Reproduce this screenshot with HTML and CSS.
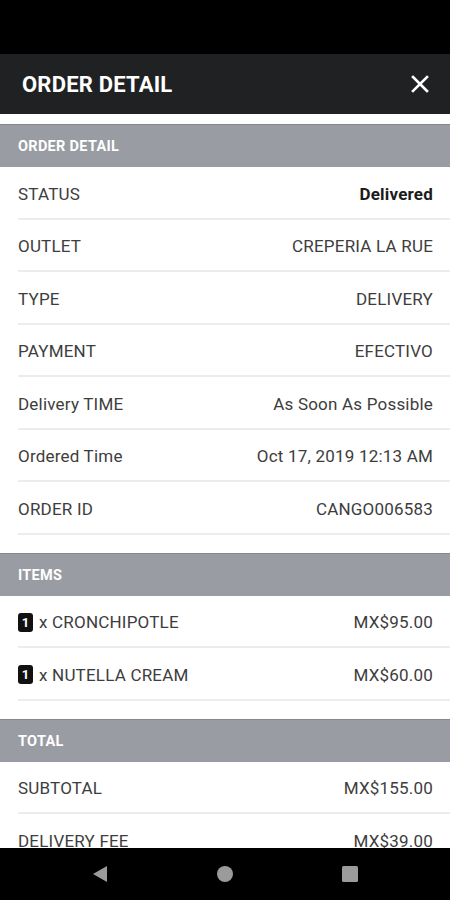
FILE: index.html
```html
<!DOCTYPE html>
<html lang="en">
  <head>
    <meta charset="UTF-8" />
    <meta name="viewport" content="width=device-width, initial-scale=1.0" />
    <title>Order Detail</title>
    <link rel="stylesheet" href="styles.css">
  </head>
  <body>
    <div class="phone">
      <div class="status-bar"></div>

      <header class="toolbar">
        <h1>ORDER DETAIL</h1>
        <svg class="close" width="18" height="18" viewBox="0 0 18 18">
          <path d="M2 2 L16 16 M16 2 L2 16" stroke="#fff" stroke-width="2.6" stroke-linecap="square" />
        </svg>
      </header>

      <main class="content">
        <section class="section">
          <div class="section-title">ORDER DETAIL</div>
          <div class="row"><span class="label">STATUS</span><span class="value strong">Delivered</span></div>
          <div class="row"><span class="label">OUTLET</span><span class="value">CREPERIA LA RUE</span></div>
          <div class="row"><span class="label">TYPE</span><span class="value">DELIVERY</span></div>
          <div class="row"><span class="label">PAYMENT</span><span class="value">EFECTIVO</span></div>
          <div class="row"><span class="label">Delivery TIME</span><span class="value">As Soon As Possible</span></div>
          <div class="row"><span class="label">Ordered Time</span><span class="value">Oct 17, 2019 12:13 AM</span></div>
          <div class="row"><span class="label">ORDER ID</span><span class="value">CANGO006583</span></div>
        </section>

        <section class="section">
          <div class="section-title">ITEMS</div>
          <div class="row">
            <span class="label"><span class="qty">1</span> x CRONCHIPOTLE</span>
            <span class="value">MX$95.00</span>
          </div>
          <div class="row">
            <span class="label"><span class="qty">1</span> x NUTELLA CREAM</span>
            <span class="value">MX$60.00</span>
          </div>
        </section>

        <section class="section">
          <div class="section-title">TOTAL</div>
          <div class="row"><span class="label">SUBTOTAL</span><span class="value">MX$155.00</span></div>
          <div class="row"><span class="label">DELIVERY FEE</span><span class="value">MX$39.00</span></div>
        </section>
      </main>

      <nav class="nav-bar">
        <svg width="18" height="18" viewBox="0 0 18 18"><path d="M16 1 L16 17 L2 9 Z" fill="#9b9b9b" /></svg>
        <svg width="18" height="18" viewBox="0 0 18 18"><circle cx="9" cy="9" r="8" fill="#9b9b9b" /></svg>
        <svg width="18" height="18" viewBox="0 0 18 18"><rect x="1" y="1" width="16" height="16" rx="1.5" fill="#9b9b9b" /></svg>
      </nav>
    </div>
  </body>
</html>
```

FILE: styles.css
```css
body {
  margin: 0;
  padding: 0;
  font-family: Roboto, "Liberation Sans", sans-serif;
  background-color: #fff;
}

.phone {
  display: flex;
  flex-direction: column;
  width: 450px;
  height: 900px;
  overflow: hidden;
}

.status-bar {
  height: 54px;
  background-color: #000;
  flex-shrink: 0;
}

.toolbar {
  height: 60px;
  background-color: #202123;
  display: flex;
  align-items: center;
  justify-content: space-between;
  padding: 0 21px 0 22px;
  flex-shrink: 0;
}

.toolbar h1 {
  margin: 0;
  color: #fff;
  font-size: 22px;
  font-weight: 700;
  letter-spacing: 0.2px;
}

.close {
  display: block;
}

.content {
  flex: 1;
  overflow: hidden;
  padding-top: 10px;
}

.section {
  margin-bottom: 18px;
}

.section-title {
  height: 43px;
  box-sizing: border-box;
  display: flex;
  align-items: center;
  padding: 1px 0 0 18px;
  background-color: #999ca3;
  border-top: 1px solid #85878d;
  color: #fff;
  font-size: 14.5px;
  font-weight: 700;
  letter-spacing: 0.3px;
}

.row {
  height: 52.5px;
  box-sizing: border-box;
  margin-left: 18px;
  padding: 3px 17px 0 0;
  border-bottom: 2px solid #ececec;
  display: flex;
  align-items: center;
  justify-content: space-between;
  font-size: 17px;
  color: #3d3d3d;
  letter-spacing: 0.2px;
}

.label {
  display: flex;
  align-items: center;
}

.value.strong {
  font-weight: 700;
  color: #1c1c1c;
}

.qty {
  display: inline-flex;
  align-items: center;
  justify-content: center;
  width: 15px;
  height: 19px;
  margin-right: 6px;
  border-radius: 3px;
  background-color: #111;
  color: #fff;
  font-size: 13px;
  font-weight: 700;
  letter-spacing: 0;
}

.nav-bar {
  height: 52px;
  background-color: #000;
  flex-shrink: 0;
  display: flex;
  align-items: center;
  justify-content: space-between;
  padding: 0 91px 0 91px;
}

.nav-bar svg {
  display: block;
}
```
